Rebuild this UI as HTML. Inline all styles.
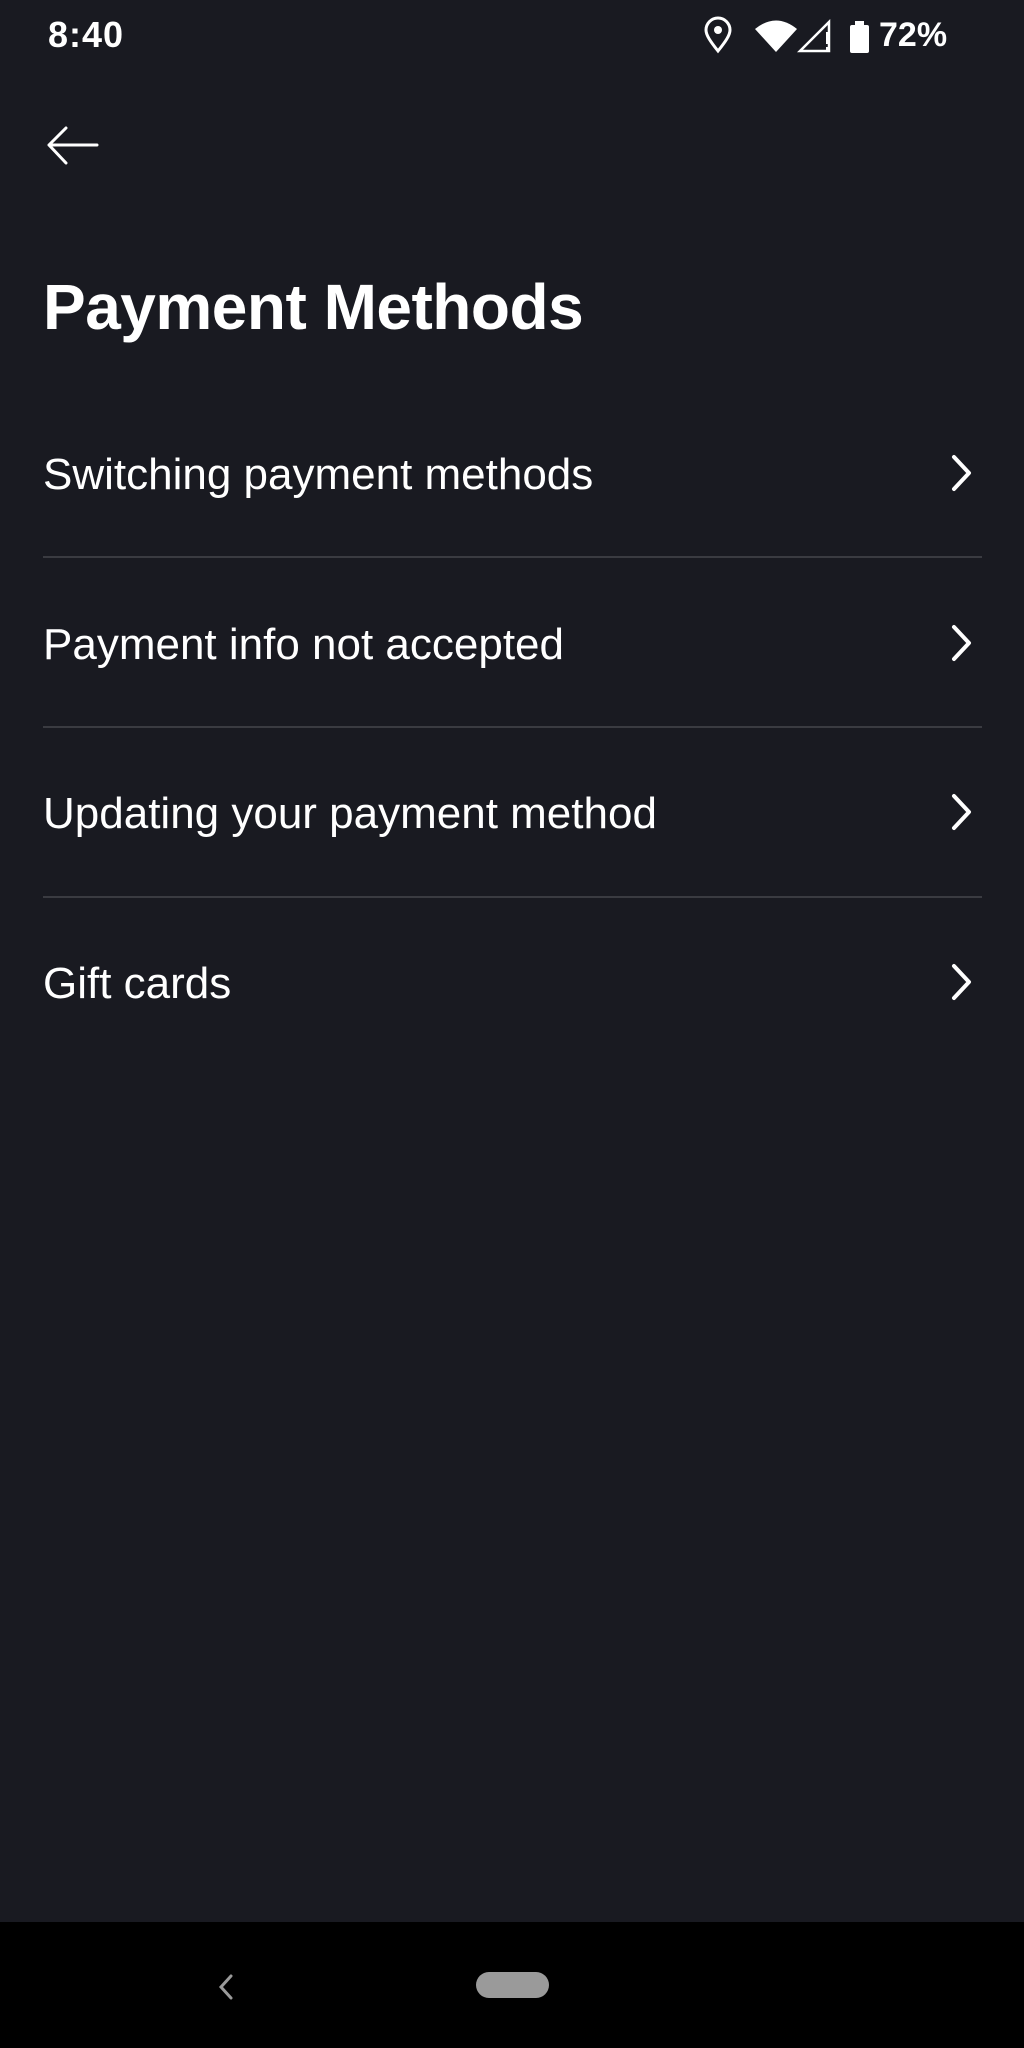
<!DOCTYPE html>
<html><head><meta charset="utf-8"><style>
html,body{margin:0;padding:0}
body{width:1024px;height:2048px;background:#191a21;position:relative;overflow:hidden;font-family:"Liberation Sans",sans-serif;color:#fff}
.a{position:absolute}
.item{position:absolute;left:43px;font-size:44px;line-height:48px}
.div{position:absolute;left:43px;width:939px;height:2px;background:#3a3b41}
</style></head><body>
<div class="a" style="left:48px;top:16px;font-size:36px;font-weight:bold;line-height:38px;letter-spacing:1px">8:40</div>
<svg class="a" style="left:700px;top:16px" width="260" height="44" viewBox="700 16 260 44">
<path d="M718 51 C710 41 706 35 706 30 A12 12 0 0 1 730 30 C730 35 726 41 718 51Z" fill="none" stroke="#fff" stroke-width="3"/>
<circle cx="718" cy="30" r="4" fill="#fff"/>
<path d="M755 29 Q776 12 797 29 L776 52Z" fill="#fff"/>
<path d="M800 51 L829 22 L829 51Z" fill="none" stroke="#fff" stroke-width="2.5"/>
<rect x="826" y="32" width="4" height="12" fill="#fff"/><rect x="826" y="47" width="4" height="4" fill="#fff"/>
<rect x="850" y="25" width="19" height="28" rx="2" fill="#fff"/><rect x="855" y="21" width="9" height="5" fill="#fff"/>
</svg>
<div class="a" style="left:879px;top:16px;font-size:34px;font-weight:bold;line-height:38px">72%</div>
<svg class="a" style="left:46px;top:124px" width="56" height="44" viewBox="0 0 56 44">
<path d="M3 21 H51 M20 4 L3 21 L20 39" fill="none" stroke="#fff" stroke-width="3" stroke-linecap="round" stroke-linejoin="round"/>
</svg>
<div class="a" style="left:43px;top:272px;font-size:64px;line-height:70px;font-weight:bold;letter-spacing:-0.5px">Payment Methods</div>
<div class="item" style="top:451px">Switching payment methods</div>
<div class="div" style="top:556px"></div>
<div class="item" style="top:621px">Payment info not accepted</div>
<div class="div" style="top:726px"></div>
<div class="item" style="top:790px">Updating your payment method</div>
<div class="div" style="top:896px"></div>
<div class="item" style="top:960px">Gift cards</div>
<svg class="a" style="left:945px;top:450px" width="36" height="560" viewBox="0 0 36 560">
<g fill="none" stroke="#fff" stroke-width="4" stroke-linecap="round" stroke-linejoin="round">
<path d="M9 7 L24 23 L9 39"/>
<path d="M9 177 L24 193 L9 209"/>
<path d="M9 346 L24 362 L9 378"/>
<path d="M9 516 L24 532 L9 548"/>
</g></svg>
<div class="a" style="left:0;top:1922px;width:1024px;height:126px;background:#000"></div>
<svg class="a" style="left:214px;top:1972px" width="24" height="30" viewBox="0 0 24 30"><path d="M17 4 L7 15 L17 26" fill="none" stroke="#9a9a9a" stroke-width="3" stroke-linecap="round"/></svg>
<div class="a" style="left:476px;top:1972px;width:73px;height:26px;border-radius:13px;background:#9a9a9a"></div>
</body></html>
